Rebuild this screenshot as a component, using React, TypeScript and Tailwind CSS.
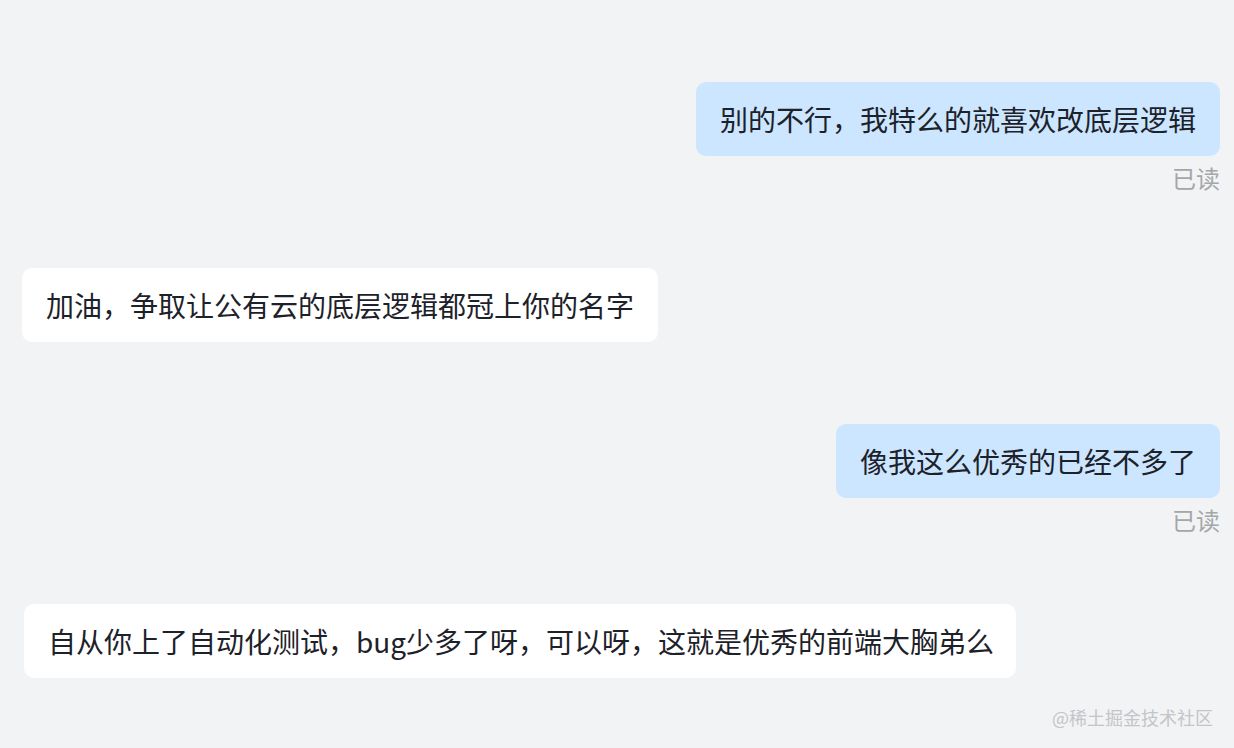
const font = { fontFamily: '"Noto Sans CJK SC", "Noto Sans", sans-serif' };

type Msg = { text: string; mine: boolean; gap: string };

const messages: Msg[] = [
  { text: '别的不行，我特么的就喜欢改底层逻辑', mine: true, gap: 'mt-[82px]' },
  { text: '加油，争取让公有云的底层逻辑都冠上你的名字', mine: false, gap: 'mt-[74px]' },
  { text: '像我这么优秀的已经不多了', mine: true, gap: 'mt-[82px]' },
  { text: '自从你上了自动化测试，bug少多了呀，可以呀，这就是优秀的前端大胸弟么', mine: false, gap: 'mt-[68px]' },
];

export default function App() {
  return (
    <div className="relative w-[1234px] h-[748px] bg-[#f2f3f5] overflow-hidden" style={font}>
      <div className="flex flex-col pl-[22px] pr-[14px]">
        {messages.map((m, i) => (
          <div key={i} className={`${m.gap} flex flex-col ${m.mine ? 'items-end' : 'items-start'}`}>
            <div
              className={`rounded-[10px] px-[24px] py-[17px] text-[28px] leading-[40px] text-[#1d2129] whitespace-nowrap ${
                m.mine ? 'bg-[#cbe6fe]' : 'bg-white'
              } ${i === 3 ? 'ml-[2px] pr-[22px]' : ''}`}
            >
              {m.text}
            </div>
            {m.mine && (
              <div className="mt-[6px] text-[24px] leading-[32px] text-[#a5a6a8]">已读</div>
            )}
          </div>
        ))}
      </div>
      <div className="absolute right-[21px] bottom-[18px] text-[18px] leading-[26px] text-[#c4c5c8]">
        @稀土掘金技术社区
      </div>
    </div>
  );
}
